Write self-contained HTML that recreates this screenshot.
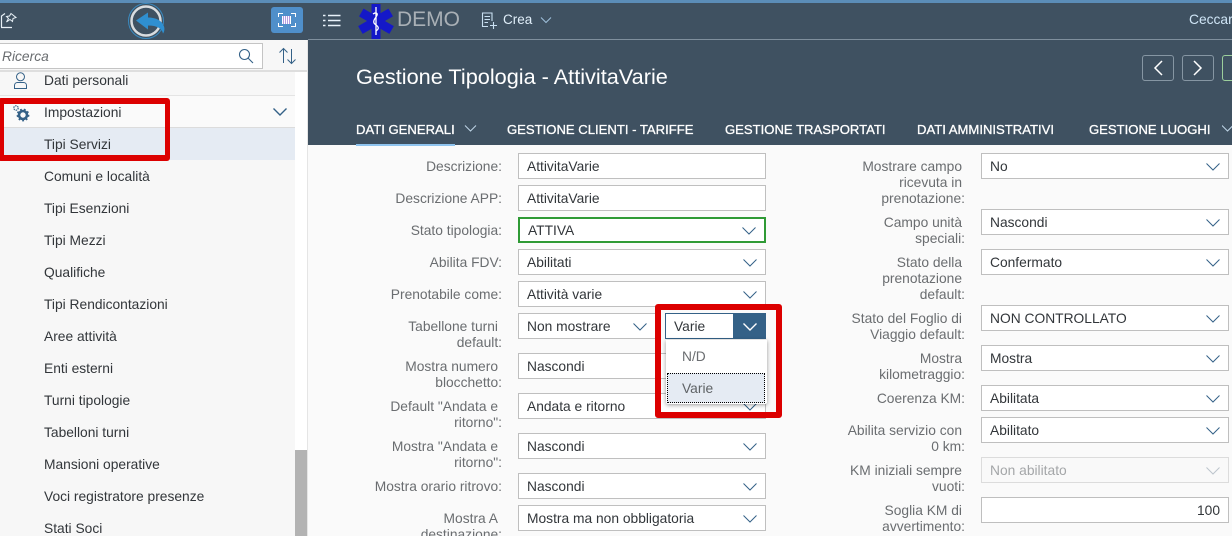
<!DOCTYPE html>
<html lang="it"><head><meta charset="utf-8"><title>Gestione Tipologia</title>
<style>
html,body{margin:0;padding:0;width:1232px;height:536px;overflow:hidden;background:#fafafa}
body{font-family:"Liberation Sans",sans-serif;font-size:13.8px;position:relative}
div,span,svg{position:absolute;box-sizing:border-box}
.t{white-space:nowrap;line-height:16px}
.m{left:44px;color:#32363a;white-space:nowrap;line-height:16px}
.l{color:#6a6d70;text-align:right;white-space:nowrap;line-height:16px;margin-top:1px}
.f{background:#fff;border:1px solid #bfbfbf;color:#32363a;height:26px;line-height:26px;padding-left:8px;white-space:nowrap}
.c{width:14px;height:8px;fill:none;stroke:#346187;stroke-width:1}
.tab{color:#fff;white-space:nowrap;top:122px;line-height:16px;font-size:13.1px;-webkit-text-stroke:.3px #fff}
</style></head><body>
<!-- bars -->
<div style="left:0;top:0;width:1232px;height:3px;background:#5b8db8"></div>
<div style="left:0;top:3px;width:308px;height:37px;background:#3f5161"></div>
<div style="left:308px;top:3px;width:924px;height:142px;background:#3f5161"></div>
<div style="left:308px;top:39px;width:924px;height:1px;background:#7f8f9d"></div>
<div style="left:0;top:40px;width:308px;height:496px;background:#f7f7f7"></div>
<div style="left:307px;top:40px;width:1px;height:496px;background:#e5e5e5"></div>
<!-- sidebar header -->
<svg style="left:0;top:10px" width="20" height="20" viewBox="0 0 20 20" fill="none" stroke="#e8f0f6" stroke-width="1.2"><path d="M1 17.500H12M1.500 17V6L5 3.500"/><path d="M11 3.500l5 4-3 1-.5 3-2.500-2-3.500 2.500 2-3.500-2-2 3-.5z" stroke-width="1"/></svg>
<svg style="left:126px;top:2px" width="44" height="38" viewBox="0 0 44 38" fill="none"><circle cx="20" cy="19" r="17.500" stroke="#3a8ac0" stroke-width="1"/><circle cx="20" cy="19" r="14.500" stroke="#d9dde0" stroke-width="2.500"/><path d="M10 18.500l12-8v5c8 0 14 3 16 9 1 3 0 6-1 7-1-5-6-8-15-8v4z" fill="#2f8fd0"/></svg>
<div style="left:271px;top:7px;width:32px;height:26px;background:#4f8fca;border-radius:3px"></div>
<svg style="left:278px;top:13px" width="18" height="14" viewBox="0 0 18 14" fill="none" shape-rendering="crispEdges"><path d="M.5 4V.5H5M13 .5H17.500V4M.5 10V13.500H5M13 13.500H17.500V10" stroke="#fff"/><path d="M4.500 3v8M6.500 3v8M8.500 3v8M10.500 3v8M12.500 3v8" stroke="#fff"/><path d="M5.500 3v8M7.500 3v8M9.500 3v8M11.500 3v8" stroke="#b79be0"/></svg>
<!-- search -->
<div style="left:-2px;top:43px;width:265px;height:26px;background:#fff;border:1px solid #c4c4c4"></div>
<div class="t" style="left:2px;top:49px;color:#6a6d70;font-style:italic">Ricerca</div>
<svg style="left:238px;top:48px" width="16" height="16" viewBox="0 0 16 16" fill="none" stroke="#346187" stroke-width="1.100"><circle cx="6.500" cy="6.500" r="5"/><path d="M10 10l5 5"/></svg>
<svg style="left:278px;top:47px" width="19" height="18" viewBox="0 0 19 18" fill="none" stroke="#346187" stroke-width="1"><path d="M5.500 16V1.500M1.500 5.500l4-4 4 4M13.500 2v14.500M9.500 12.500l4 4 4-4"/></svg>
<div style="left:0;top:70px;width:307px;height:2px;background:#dedede"></div>
<!-- menu -->
<div style="left:0;top:72px;width:295px;height:464px;background:#f7f7f7"></div>
<div style="left:0;top:95px;width:295px;height:1px;background:#e4e4e4"></div>
<div style="left:0;top:96px;width:295px;height:31px;background:#fafafa"></div>
<div style="left:0;top:127px;width:295px;height:33px;background:#e5ebf3;border-top:1px solid #dcdcdc"></div>
<svg style="left:14px;top:72px" width="13" height="17" viewBox="0 0 13 17" fill="none" stroke="#346187" stroke-width="1"><circle cx="6.500" cy="4.800" r="4"/><path d="M.5 16.500v-3c0-2 1.500-3 3-3h6c1.500 0 3 1 3 3v3z"/></svg>
<svg style="left:12px;top:104px" width="18" height="18" viewBox="0 0 18 18" fill="none" stroke="#346187"><circle cx="4" cy="4" r="2.200" stroke-width="1.200" stroke-dasharray="1.500 .8"/><circle cx="11" cy="11" r="4" stroke-width="2.600"/><circle cx="11" cy="11" r="5.500" stroke-width="1.800" stroke-dasharray="1.800 2"/></svg>
<div class="m" style="top:73px">Dati personali</div>
<div class="m" style="top:105px">Impostazioni</div>
<svg class="c" style="left:273px;top:108px"><path d="M.5 .5L7 7l6.500-6.500" stroke-width="1.400"/></svg>
<div class="m" style="top:137px">Tipi Servizi</div>
<div class="m" style="top:169px">Comuni e località</div>
<div class="m" style="top:201px">Tipi Esenzioni</div>
<div class="m" style="top:233px">Tipi Mezzi</div>
<div class="m" style="top:265px">Qualifiche</div>
<div class="m" style="top:297px">Tipi Rendicontazioni</div>
<div class="m" style="top:329px">Aree attività</div>
<div class="m" style="top:361px">Enti esterni</div>
<div class="m" style="top:393px">Turni tipologie</div>
<div class="m" style="top:425px">Tabelloni turni</div>
<div class="m" style="top:457px">Mansioni operative</div>
<div class="m" style="top:489px">Voci registratore presenze</div>
<div class="m" style="top:521px">Stati Soci</div>
<!-- scrollbar -->
<div style="left:295px;top:72px;width:12px;height:464px;background:#fff"></div>
<div style="left:295px;top:450px;width:12px;height:86px;background:#b3b3b3"></div>
<!-- topbar -->
<svg style="left:323px;top:14px" width="18" height="13" viewBox="0 0 18 13" fill="none" stroke="#e8f2fa" stroke-width="1.400"><path d="M0 1.500h2.500M5 1.500h12.500M0 6.500h2.500M5 6.500h12.500M0 11.500h2.500M5 11.500h12.500"/></svg>
<svg style="left:357px;top:3px" width="38" height="36" viewBox="0 0 38 36"><g fill="#1418c8"><rect x="14.500" y="1" width="9" height="35"/><rect x="14.500" y="1" width="9" height="35" transform="rotate(60 19 18)"/><rect x="14.500" y="1" width="9" height="35" transform="rotate(-60 19 18)"/></g><path d="M19 4V32M16 11c3-2 6-1 3 3s-3 6 0 8 3 4 0 6" fill="none" stroke="#fff" stroke-width="1.300"/></svg>
<div class="t" style="left:397px;top:6px;font-size:21px;line-height:28px;color:#a9b0b6">DEMO</div>
<svg style="left:481px;top:12px" width="17" height="17" viewBox="0 0 17 17" fill="none" stroke="#c9e0f2" stroke-width="1.100"><path d="M7 14.500H1.500V1H11V9M3.500 4.500H9M3.500 7.500H9M3.500 10.500H7M9 13.500h7M12.500 10v7"/></svg>
<div class="t" style="left:503px;top:12px;color:#e0eef9;font-size:13.5px">Crea</div>
<svg class="c" style="left:540px;top:17px;width:12px;height:7px"><path d="M1 .5l5 5 5-5" stroke="#9fc0dc"/></svg>
<div class="t" style="left:1189px;top:12px;color:#cfe5f6">Ceccarelli</div>
<!-- title -->
<div class="t" style="left:356px;top:63px;font-size:21.700px;line-height:28px;color:#fff">Gestione Tipologia - AttivitaVarie</div>
<div style="left:1142px;top:55px;width:32px;height:26px;border:1px solid #8696a3;border-radius:3px"></div>
<svg style="left:1152px;top:60px" width="12" height="16" viewBox="0 0 12 16" fill="none" stroke="#fff" stroke-width="1.500"><path d="M10 1L3 8l7 7"/></svg>
<div style="left:1182px;top:55px;width:32px;height:26px;border:1px solid #8696a3;border-radius:3px"></div>
<svg style="left:1192px;top:60px" width="12" height="16" viewBox="0 0 12 16" fill="none" stroke="#fff" stroke-width="1.500"><path d="M2 1l7 7-7 7"/></svg>
<div style="left:1222px;top:55px;width:32px;height:26px;border:1px solid #9ccf9c;border-radius:3px"></div>
<!-- tabs -->
<div class="tab" style="left:356px">DATI GENERALI</div>
<svg class="c" style="left:464px;top:125px;width:13px;height:7px"><path d="M1 .5l5.500 5.500 5.500-5.500" stroke="#c0d6e8"/></svg>
<div style="left:356px;top:144px;width:99px;height:2px;background:#8fc4ef"></div>
<div class="tab" style="left:507px">GESTIONE CLIENTI - TARIFFE</div>
<div class="tab" style="left:725px">GESTIONE TRASPORTATI</div>
<div class="tab" style="left:917px">DATI AMMINISTRATIVI</div>
<div class="tab" style="left:1089px">GESTIONE LUOGHI</div>
<svg class="c" style="left:1222px;top:125px;width:10px;height:7px"><path d="M0 .5l5.500 5.500 5.500-5.500" stroke="#c0d6e8"/></svg>
<!-- form left -->
<div class="l" style="right:730px;top:158px">Descrizione:</div>
<div class="f" style="left:518px;top:153px;width:248px">AttivitaVarie</div>
<div class="l" style="right:730px;top:190px">Descrizione APP:</div>
<div class="f" style="left:518px;top:185px;width:248px">AttivitaVarie</div>
<div class="l" style="right:730px;top:222px">Stato tipologia:</div>
<div class="f" style="left:518px;top:217px;width:248px;border:2px solid #2f9a35;line-height:23px;padding-left:8px">ATTIVA</div>
<svg class="c" style="left:742px;top:227px"><path d="M.5 .5L7 7l6.500-6.500"/></svg>
<div class="l" style="right:730px;top:254px">Abilita FDV:</div>
<div class="f" style="left:518px;top:249px;width:248px">Abilitati</div>
<svg class="c" style="left:743px;top:259px"><path d="M.5 .5L7 7l6.500-6.500"/></svg>
<div class="l" style="right:730px;top:286px">Prenotabile come:</div>
<div class="f" style="left:518px;top:281px;width:248px">Attività varie</div>
<svg class="c" style="left:743px;top:291px"><path d="M.5 .5L7 7l6.500-6.500"/></svg>
<div class="l" style="right:734px;top:318px">Tabellone turni</div>
<div class="l" style="right:730px;top:334px">default:</div>
<div class="f" style="left:518px;top:313px;width:140px">Non mostrare</div>
<svg class="c" style="left:633px;top:323px"><path d="M.5 .5L7 7l6.500-6.500"/></svg>
<div class="l" style="right:734px;top:358px">Mostra numero</div>
<div class="l" style="right:730px;top:374px">blocchetto:</div>
<div class="f" style="left:518px;top:353px;width:248px">Nascondi</div>
<div class="l" style="right:734px;top:398px">Default "Andata e</div>
<div class="l" style="right:730px;top:414px">ritorno":</div>
<div class="f" style="left:518px;top:393px;width:248px">Andata e ritorno</div>
<svg class="c" style="left:743px;top:403px"><path d="M.5 .5L7 7l6.500-6.500"/></svg>
<div class="l" style="right:734px;top:438px">Mostra "Andata e</div>
<div class="l" style="right:730px;top:454px">ritorno":</div>
<div class="f" style="left:518px;top:433px;width:248px">Nascondi</div>
<svg class="c" style="left:743px;top:443px"><path d="M.5 .5L7 7l6.500-6.500"/></svg>
<div class="l" style="right:730px;top:478px">Mostra orario ritrovo:</div>
<div class="f" style="left:518px;top:473px;width:248px">Nascondi</div>
<svg class="c" style="left:743px;top:483px"><path d="M.5 .5L7 7l6.500-6.500"/></svg>
<div class="l" style="right:734px;top:510px">Mostra A</div>
<div class="l" style="right:730px;top:526px">destinazione:</div>
<div class="f" style="left:518px;top:505px;width:248px">Mostra ma non obbligatoria</div>
<svg class="c" style="left:743px;top:515px"><path d="M.5 .5L7 7l6.500-6.500"/></svg>
<!-- form right -->
<div class="l" style="right:270px;top:158px">Mostrare campo</div>
<div class="l" style="right:270px;top:174px">ricevuta in</div>
<div class="l" style="right:267px;top:190px">prenotazione:</div>
<div class="f" style="left:981px;top:153px;width:248px">No</div>
<svg class="c" style="left:1206px;top:163px"><path d="M.5 .5L7 7l6.500-6.500"/></svg>
<div class="l" style="right:270px;top:214px">Campo unità</div>
<div class="l" style="right:267px;top:230px">speciali:</div>
<div class="f" style="left:981px;top:209px;width:248px">Nascondi</div>
<svg class="c" style="left:1206px;top:219px"><path d="M.5 .5L7 7l6.500-6.500"/></svg>
<div class="l" style="right:270px;top:254px">Stato della</div>
<div class="l" style="right:270px;top:270px">prenotazione</div>
<div class="l" style="right:267px;top:286px">default:</div>
<div class="f" style="left:981px;top:249px;width:248px">Confermato</div>
<svg class="c" style="left:1206px;top:259px"><path d="M.5 .5L7 7l6.500-6.500"/></svg>
<div class="l" style="right:270px;top:310px">Stato del Foglio di</div>
<div class="l" style="right:267px;top:326px">Viaggio default:</div>
<div class="f" style="left:981px;top:305px;width:248px">NON CONTROLLATO</div>
<svg class="c" style="left:1206px;top:315px"><path d="M.5 .5L7 7l6.500-6.500"/></svg>
<div class="l" style="right:270px;top:350px">Mostra</div>
<div class="l" style="right:267px;top:366px">kilometraggio:</div>
<div class="f" style="left:981px;top:345px;width:248px">Mostra</div>
<svg class="c" style="left:1206px;top:355px"><path d="M.5 .5L7 7l6.500-6.500"/></svg>
<div class="l" style="right:267px;top:390px">Coerenza KM:</div>
<div class="f" style="left:981px;top:385px;width:248px">Abilitata</div>
<svg class="c" style="left:1206px;top:395px"><path d="M.5 .5L7 7l6.500-6.500"/></svg>
<div class="l" style="right:270px;top:422px">Abilita servizio con</div>
<div class="l" style="right:267px;top:438px">0 km:</div>
<div class="f" style="left:981px;top:417px;width:248px">Abilitato</div>
<svg class="c" style="left:1206px;top:427px"><path d="M.5 .5L7 7l6.500-6.500"/></svg>
<div class="l" style="right:270px;top:462px">KM iniziali sempre</div>
<div class="l" style="right:267px;top:478px">vuoti:</div>
<div class="f" style="left:981px;top:457px;width:248px;background:#f9f9f9;border-color:#dcdcdc;color:#a4a6a8">Non abilitato</div>
<svg class="c" style="left:1206px;top:467px"><path d="M.5 .5L7 7l6.500-6.500" stroke="#bcc4cc"/></svg>
<div class="l" style="right:270px;top:502px">Soglia KM di</div>
<div class="l" style="right:267px;top:518px">avvertimento:</div>
<div class="f" style="left:981px;top:497px;width:248px;text-align:right;padding-right:8px">100</div>
<!-- dropdown -->
<div class="f" style="left:665px;top:313px;width:101px;border-color:#346187">Varie</div>
<div style="left:733px;top:314px;width:33px;height:24px;background:#346187"></div>
<svg class="c" style="left:743px;top:323px"><path d="M.5 .5L7 7l6.500-6.500" stroke="#fff" stroke-width="1.400"/></svg>
<div style="left:666px;top:340px;width:101px;height:64px;background:#fff;box-shadow:0 1px 4px rgba(0,0,0,.4);border-radius:0 0 2px 2px"></div>
<div class="t" style="left:682px;top:349px;color:#6a6d70">N/D</div>
<div style="left:667px;top:373px;width:98px;height:30px;background:#e5ebf3;border:1px dotted #000"></div>
<div class="t" style="left:682px;top:381px;color:#5f6366">Varie</div>
<!-- red annotations -->
<div style="left:-2px;top:98px;width:172px;height:63px;border:6px solid #dc0000;border-right-width:5px;border-radius:3px"></div>
<div style="left:655px;top:304px;width:127px;height:114px;border:6px solid #dc0000;border-radius:3px"></div>
</body></html>
